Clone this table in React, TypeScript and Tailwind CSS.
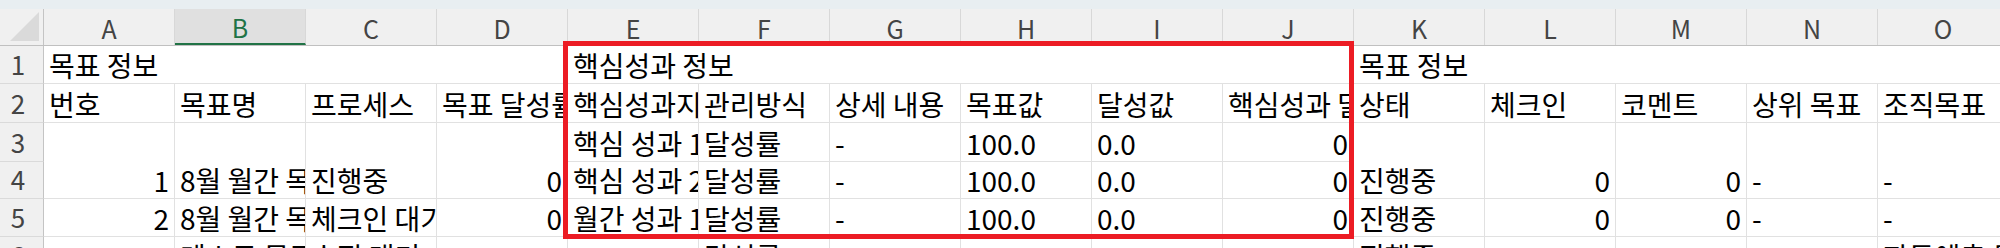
import React from 'react'

const cols = ['A', 'B', 'C', 'D', 'E', 'F', 'G', 'H', 'I', 'J', 'K', 'L', 'M', 'N', 'O']

const heads = ['번호', '목표명', '프로세스', '목표 달성률', '핵심성과지표', '관리방식', '상세 내용', '목표값', '달성값', '핵심성과 달성률', '상태', '체크인', '코멘트', '상위 목표', '조직목표']

type CellProps = { children?: React.ReactNode; right?: boolean; className?: string }

function Cell({ children, right, className = '' }: CellProps) {
  return (
    <div className={`flex items-end overflow-hidden whitespace-nowrap border-r border-b border-[#e1e1e1] px-[5px] pb-[4px] ${right ? 'justify-end' : 'justify-start'} ${className}`}>
      {children}
    </div>
  )
}

function RowHead({ n }: { n: number }) {
  return (
    <div className="flex items-end justify-center border-r border-b border-r-[#c4c4c4] border-b-[#dadada] bg-[#f0f0f0] pb-[5px] pr-[7px] text-[26px] text-[#444]">
      {n}
    </div>
  )
}

export default function App() {
  return (
    <div className="relative h-[248px] w-[2000px] overflow-hidden bg-white font-['Noto_Sans_CJK_KR',sans-serif] text-[28px] leading-[28px] text-black">
      <div className="h-[9px] bg-[#e8eef1]" />

      {/* column letters */}
      <div className="grid h-[37px] grid-cols-[44px_repeat(15,131px)] border-b border-[#c0c0c0] bg-[#f0f0f0] text-[25px] text-[#444]">
        <div className="flex items-end justify-end border-r border-[#c4c4c4] pr-[3px] pb-[3px]">
          <svg width="30" height="30" viewBox="0 0 30 30">
            <polygon points="29,0 29,29 0,29" fill="#dadada" />
          </svg>
        </div>
        {cols.map((c) =>
          c === 'B' ? (
            <div key={c} className="flex items-center justify-center border-r border-b-2 border-r-[#d8d8d8] border-b-[#217346] bg-[#e0e0e0] pt-[2px] text-[#217346]">
              {c}
            </div>
          ) : (
            <div key={c} className="flex items-center justify-center border-r border-[#d8d8d8] pt-[2px]">
              {c}
            </div>
          )
        )}
      </div>

      {/* sheet body */}
      <div className="grid grid-cols-[44px_repeat(15,131px)] grid-rows-[38px_39px_39px_37px_38px_38px]">
        <RowHead n={1} />
        <Cell className="col-span-4">목표 정보</Cell>
        <Cell className="col-span-6">핵심성과 정보</Cell>
        <Cell className="col-span-5">목표 정보</Cell>

        <RowHead n={2} />
        {heads.map((h) => (
          <Cell key={h}>{h}</Cell>
        ))}

        <RowHead n={3} />
        <Cell right className="row-span-2">1</Cell>
        <Cell className="row-span-2">8월 월간 목표 테스트</Cell>
        <Cell className="row-span-2">진행중</Cell>
        <Cell right className="row-span-2">0</Cell>
        <Cell>핵심 성과 1</Cell>
        <Cell>달성률</Cell>
        <Cell>-</Cell>
        <Cell>100.0</Cell>
        <Cell>0.0</Cell>
        <Cell right>0</Cell>
        <Cell className="row-span-2">진행중</Cell>
        <Cell right className="row-span-2">0</Cell>
        <Cell right className="row-span-2">0</Cell>
        <Cell className="row-span-2">-</Cell>
        <Cell className="row-span-2">-</Cell>

        <RowHead n={4} />
        <Cell>핵심 성과 2</Cell>
        <Cell>달성률</Cell>
        <Cell>-</Cell>
        <Cell>100.0</Cell>
        <Cell>0.0</Cell>
        <Cell right>0</Cell>

        <RowHead n={5} />
        <Cell right>2</Cell>
        <Cell>8월 월간 목표 테스트</Cell>
        <Cell>체크인 대기</Cell>
        <Cell right>0</Cell>
        <Cell>월간 성과 1</Cell>
        <Cell>달성률</Cell>
        <Cell>-</Cell>
        <Cell>100.0</Cell>
        <Cell>0.0</Cell>
        <Cell right>0</Cell>
        <Cell>진행중</Cell>
        <Cell right>0</Cell>
        <Cell right>0</Cell>
        <Cell>-</Cell>
        <Cell>-</Cell>

        <RowHead n={6} />
        <Cell />
        <Cell>테스트 목표</Cell>
        <Cell>수집 대기</Cell>
        <Cell />
        <Cell />
        <Cell>달성률</Cell>
        <Cell />
        <Cell />
        <Cell />
        <Cell />
        <Cell>진행중</Cell>
        <Cell />
        <Cell />
        <Cell />
        <Cell>자동예측 목표</Cell>
      </div>

      {/* highlight box */}
      <div className="absolute top-[41px] left-[563px] h-[198px] w-[791px] border-[5px] border-[#ec1c24]" />
    </div>
  )
}
